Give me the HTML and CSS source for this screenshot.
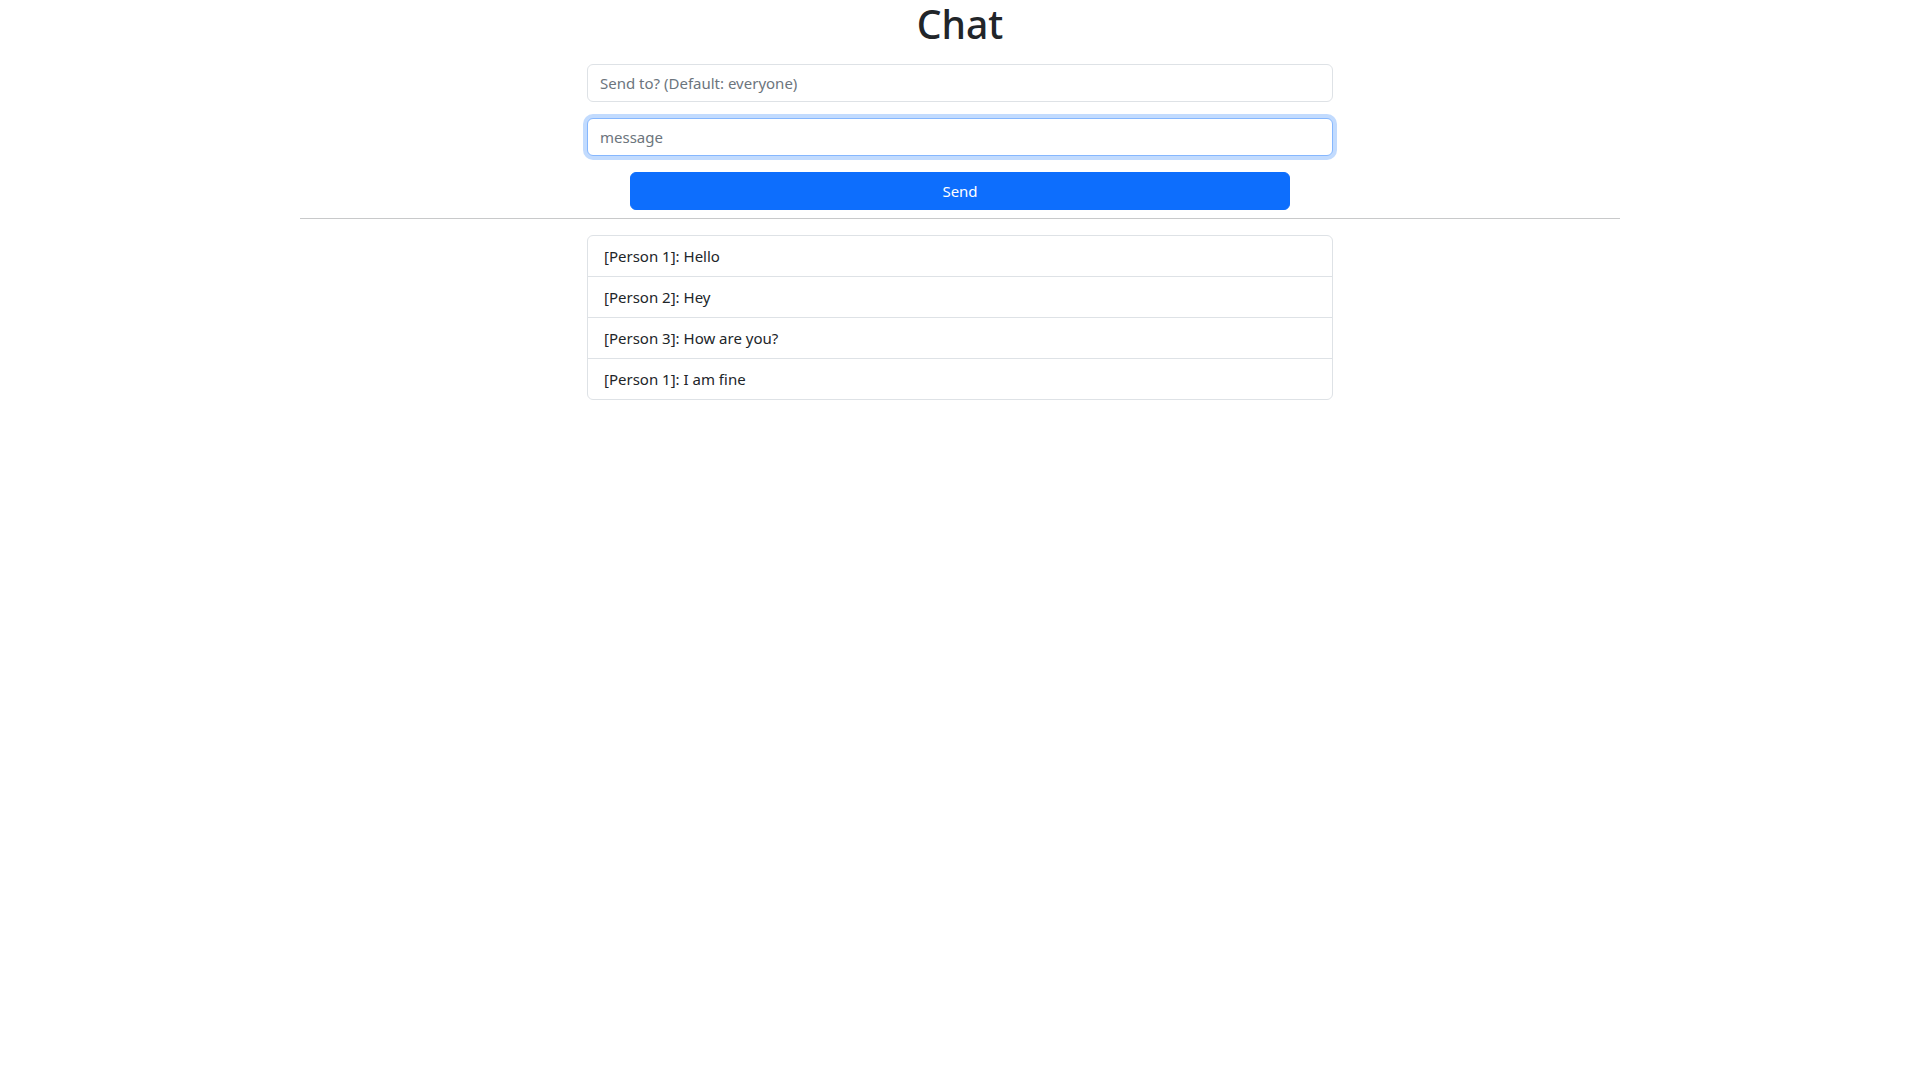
FILE: index.html
```html
<!DOCTYPE html>
<html lang="en">
<head>
<meta charset="utf-8">
<title>Chat</title>
<link rel="stylesheet" href="styles.css">
</head>
<body>
<h1 class="title">Chat</h1>
<div class="form">
  <input class="field" type="text" placeholder="Send to? (Default: everyone)">
  <input class="field field-focus" type="text" placeholder="message" autofocus>
  <button class="send" type="button">Send</button>
</div>
<hr class="divider">
<ul class="messages">
  <li class="msg">[Person 1]: Hello</li>
  <li class="msg">[Person 2]: Hey</li>
  <li class="msg">[Person 3]: How are you?</li>
  <li class="msg">[Person 1]: I am fine</li>
</ul>
</body>
</html>
```

FILE: styles.css
```css
* { box-sizing: border-box; }
body {
  margin: 0;
  font-family: "Noto Sans", "Open Sans", sans-serif;
  font-size: 15px;
  line-height: 24px;
  color: #212529;
  background: #fff;
}
.title {
  margin: 0 0 16px;
  font-size: 39px;
  font-weight: 500;
  line-height: 48px;
  text-align: center;
}
.form {
  width: 746px;
  margin: 0 auto;
  display: flex;
  flex-direction: column;
  align-items: center;
}
.field {
  width: 100%;
  height: 38px;
  padding: 6px 12px;
  font: inherit;
  color: #212529;
  border: 1px solid #dee2e6;
  border-radius: 6px;
  outline: none;
  margin-bottom: 16px;
}
.field::placeholder { color: #6c757d; }
.field-focus, .field:focus {
  border-color: #86b7fe;
  box-shadow: 0 0 0 4px rgba(13, 110, 253, 0.25);
}
.send {
  width: 660px;
  height: 38px;
  font: inherit;
  color: #fff;
  background: #0d6efd;
  border: 1px solid #0d6efd;
  border-radius: 6px;
}
.divider {
  width: 1320px;
  margin: 8px auto 16px;
  border: 0;
  border-top: 1px solid #c8c9ca;
}
.messages {
  width: 746px;
  margin: 0 auto;
  padding: 0;
  list-style: none;
  border: 1px solid #dee2e6;
  border-radius: 6px;
}
.msg {
  padding: 8px 16px;
  border-top: 1px solid #dee2e6;
}
.msg:first-child { border-top: 0; }
```
